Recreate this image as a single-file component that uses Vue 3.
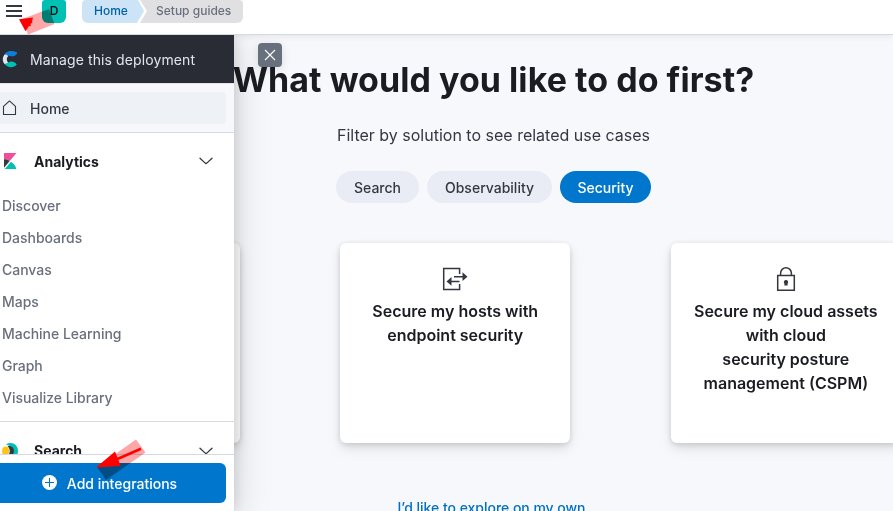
<script setup>
const links = ['Discover', 'Dashboards', 'Canvas', 'Maps', 'Machine Learning', 'Graph', 'Visualize Library']
const filters = ['Search', 'Observability', 'Security']
const active = 'Security'
</script>

<template>
  <div class="page">
    <header class="topbar">
      <button class="menu" aria-label="Toggle navigation"><i></i><i></i><i></i></button>
      <span class="avatar">D</span>
      <nav class="crumbs">
        <a class="crumb home">Home</a>
        <span class="crumb guides">Setup guides</span>
      </nav>
    </header>

    <main class="content">
      <h1>What would you like to do first?</h1>
      <p class="subtitle">Filter by solution to see related use cases</p>
      <div class="filters">
        <button v-for="f in filters" :key="f" :class="['pill', f.toLowerCase(), { active: f === active }]">{{ f }}</button>
      </div>
      <div class="cards">
        <article class="card"></article>
        <article class="card">
          <svg width="26" height="24" viewBox="0 0 26 24">
            <path d="M17.600 7V1.600H1.700v20.800h15.900V17" fill="none" stroke="#343741" stroke-width="1.500" />
            <path d="M12 9.700H21M8 14.400h9.500" stroke="#343741" stroke-width="1.500" />
            <path d="M20.500 5.200l5 4.500-5 4.400zM9.500 10l-5 4.400 5 4.400z" fill="#343741" />
          </svg>
          <h2>Secure my hosts with<br>endpoint security</h2>
        </article>
        <article class="card">
          <svg width="26" height="24" viewBox="0 0 26 24">
            <path d="M4.700 8.500h16.600v14.800H4.700z" fill="none" stroke="#343741" stroke-width="1.500" />
            <path d="M7.600 8.500V6.200a5.400 5.400 0 0 1 10.800 0v2.300" fill="none" stroke="#343741" stroke-width="1.500" />
            <path d="M13 13a2.200 2.200 0 0 0-1.500 3.800L11.300 18.600h3.400l-.2-1.800A2.200 2.200 0 0 0 13 13z" fill="#343741" />
          </svg>
          <h2>Secure my cloud assets<br>with cloud<br>security posture<br>management (CSPM)</h2>
        </article>
      </div>
      <a class="explore">I’d like to explore on my own</a>
    </main>

    <aside class="drawer">
      <div class="deployment">
        <svg class="cloud" width="18" height="18" viewBox="0 0 18 18">
          <path d="M4.500 4.500C6 .4 12 0 16.800 2.200c.6.900.2 1.600-.9 2.600-1.300 1.400-2.800 1.700-4.600 1.400C9 5.900 7 5.200 4.500 4.500z" fill="#0b7fdb" />
          <path d="M4.700 4.400c1.800 0 3 .7 3.600 1.600-2 1.600-1.900 5.200.1 6.500-.8 1.100-2.200 1.600-3.800 1.400C2.200 11.200 2.200 6.900 4.700 4.400z" fill="#dfe5ef" />
          <path d="M4.500 14c2.200 0 3.100-1.500 5-2 2.600-.9 4.900-.3 7.300 2.500C13.700 18.200 7.500 18 4.500 14z" fill="#00bfb3" />
        </svg>
        <span>Manage this deployment</span>
      </div>
      <div class="home-section">
        <a class="home-link">
          <svg width="16" height="16" viewBox="0 0 16 16">
            <path d="M1.500 6.300L7 1.300q.5-.4 1 0l5.500 5v8.200h-12z" fill="none" stroke="#343741" stroke-width="1.100" stroke-linejoin="round" />
          </svg>
          <span>Home</span>
        </a>
      </div>
      <section class="group">
        <h3>
          <svg class="solution" width="18" height="18" viewBox="0 0 18 18">
            <path d="M2 1h12.500L7.700 9C6.200 8 4.300 7.200 2 7.200z" fill="#f04e98" />
            <path d="M2 7.200c2.200 0 4.100.6 5.700 1.700L2 15.700z" fill="#343741" />
            <path d="M9 9.700c2.700 1.700 4.600 4.200 5.300 7.300H2.700z" fill="#00bfb3" />
          </svg>
          <span>Analytics</span>
          <svg class="chevron" width="16" height="16" viewBox="0 0 16 16"><path d="M2 5.200l5.200 4.900q.8.700 1.600 0L14 5.200" /></svg>
        </h3>
        <ul>
          <li v-for="link in links" :key="link">{{ link }}</li>
        </ul>
      </section>
      <section class="group clipped">
        <h3>
          <svg class="solution" width="18" height="18" viewBox="0 0 18 18">
            <path d="M4 2.500C9-.8 16 2 16 9s-7 10-12 6.500c8 0 9-11.500 0-13z" fill="#00bfb3" />
            <path d="M5.500 4.200C9 3.500 12 5.500 12 9s-3 5.500-6.500 4.800c3-2.300 3-7.300 0-9.600z" fill="#343741" />
            <ellipse cx="3.600" cy="9" rx="3.500" ry="4.600" fill="#fec514" />
          </svg>
          <span>Search</span>
          <svg class="chevron" width="16" height="16" viewBox="0 0 16 16"><path d="M2 5.200l5.200 4.900q.8.700 1.600 0L14 5.200" /></svg>
        </h3>
      </section>
      <footer>
        <button class="add">
          <svg width="16" height="16" viewBox="0 0 16 16">
            <circle cx="7.500" cy="7.500" r="7.500" fill="#fff" />
            <path d="M7.500 3v9M3 7.500h9" stroke="#0077cc" stroke-width="1.100" />
          </svg>
          <span>Add integrations</span>
        </button>
      </footer>
    </aside>

    <button class="close" aria-label="Close">
      <svg width="24" height="24" viewBox="0 0 24 24"><path d="M7 7l10 10M17 7L7 17" stroke="#fff" stroke-width="1.100" /></svg>
    </button>

    <svg class="pointer highlight at-menu" width="40" height="40" viewBox="0 0 40 40">
      <path d="M3 19L30 9l5.500 15L9 34.500z" />
    </svg>
    <svg class="pointer at-menu" width="40" height="40" viewBox="0 0 40 40">
      <path d="M0 19.300L14 17.500l-1 4 .5 1-2 1.500.3 2-2 .3-3.300 5z" />
    </svg>
    <svg class="pointer highlight at-add" width="52" height="44" viewBox="0 0 52 44">
      <path d="M1 28L40 .5l9.500 13L10 41z" />
    </svg>
    <svg class="pointer at-add" width="52" height="44" viewBox="0 0 52 44">
      <path d="M0 28.500L19 12.500l2.500 6L44.500 8.500l1 2.500-23 10L24.500 27z" />
    </svg>
  </div>
</template>

<style>
body { overflow: hidden; }
</style>

<style scoped>
* { box-sizing: border-box; }
.page {
  position: relative;
  width: 893px;
  height: 511px;
  overflow: hidden;
  background: #f7f8fc;
  color: #343741;
  font-family: Inter, sans-serif;
  font-size: 14px;
}
button { border: 0; padding: 0; font: inherit; }
h1, h2, h3, p, ul { margin: 0; padding: 0; }
svg { display: block; flex: none; }
.topbar {
  display: flex;
  align-items: flex-start;
  height: 35px;
  padding-left: 6px;
  background: #fff;
  border-bottom: 1px solid #d3dae6;
  box-shadow: 0 1px 7px rgba(0, 0, 0, .09);
}
.menu {
  display: flex;
  flex-direction: column;
  gap: 3px;
  width: 16px;
  padding-top: 5px;
  background: none;
}
.menu i { height: 2px; background: #343741; }
.avatar {
  width: 24px;
  height: 23px;
  margin-left: 20px;
  border-radius: 3px 3px 6px 6px;
  background: #00bfb3;
  color: #000;
  line-height: 22px;
  text-align: center;
  font-size: 12px;
  font-weight: 500;
}
.crumbs {
  display: flex;
  margin-left: 16px;
  font-size: 12px;
  font-weight: 500;
  line-height: 22px;
}
.crumb { height: 23px; }
.home {
  width: 62px;
  padding-left: 12px;
  border-radius: 4px 0 0 6px;
  background: #cce4f5;
  color: #0061a6;
  clip-path: polygon(0 0, 56px 0, 100% 11px, 55px 100%, 0 100%);
}
.guides {
  width: 103px;
  margin-left: -4px;
  padding-left: 16px;
  border-radius: 0 4px 6px 0;
  background: #e0e0e3;
  color: #69707d;
  clip-path: polygon(0 0, 100% 0, 100% 100%, 0 100%, 7px 11px);
}
.content {
  display: flex;
  flex-direction: column;
  align-items: center;
  width: 987px;
  padding-top: 24px;
}
h1 {
  color: #1a1c21;
  font-size: 34px;
  font-weight: 700;
  line-height: 42px;
  letter-spacing: .04px;
  white-space: nowrap;
}
.subtitle { margin-top: 22px; font-size: 16px; line-height: 24px; }
.filters { display: flex; gap: 8px; margin-top: 24px; }
.pill {
  width: 83px;
  height: 32px;
  border-radius: 16px;
  background: #e9ecf4;
  color: #343741;
  font-weight: 500;
  line-height: 33px;
}
.pill.observability { width: 125px; }
.pill.security { width: 91px; }
.pill.active { background: #0077cc; color: #fff; }
.cards {
  display: grid;
  grid-template-columns: repeat(3, 230.300px);
  gap: 100.300px;
  align-self: flex-start;
  margin: 40px 0 0 9.500px;
}
.card {
  display: flex;
  flex-direction: column;
  align-items: center;
  height: 200px;
  padding-top: 24px;
  border-radius: 6px;
  background: #fff;
  box-shadow: 0 1px 5px rgba(0, 0, 0, .1), 0 4px 8px rgba(0, 0, 0, .08), 0 7px 16px rgba(0, 0, 0, .06);
}
.card h2 {
  margin-top: 8px;
  color: #1a1c21;
  font-size: 16px;
  font-weight: 600;
  line-height: 24px;
  text-align: center;
  white-space: nowrap;
}
.explore {
  margin: 55px 4px 0 0;
  color: #0071c2;
  font-weight: 500;
  line-height: 20px;
  letter-spacing: -.03px;
}
.drawer {
  position: absolute;
  top: 35px;
  left: 0;
  display: flex;
  flex-direction: column;
  width: 234px;
  height: 476px;
  background: #fff;
  box-shadow: 0 0 12px rgba(0, 0, 0, .12), 0 6px 36px rgba(0, 0, 0, .17);
  clip-path: inset(0 -80px 0 0);
}
.deployment {
  display: flex;
  align-items: center;
  gap: 12px;
  height: 48px;
  padding-top: 1px;
  background: #2a2c35;
  color: #dfe5ef;
  letter-spacing: .1px;
}
.home-section {
  height: 50px;
  padding: 8px 8px 0 0;
  background: #f7f8fc;
  border-top: 1px solid #e2e5ed;
  border-bottom: 1px solid #d3dae6;
}
.home-link {
  display: flex;
  align-items: center;
  gap: 12px;
  height: 32px;
  padding: 1px 0 0 2px;
  border-radius: 0 4px 4px 0;
  background: #eef1f6;
  font-weight: 500;
}
.group { height: 288px; }
.group h3 {
  display: flex;
  align-items: center;
  height: 57px;
  padding: 0 20px 0 2px;
  color: #1a1c21;
  font-size: 14px;
  font-weight: 700;
}
.group .solution { margin-right: 14px; }
.chevron {
  margin-left: auto;
  fill: none;
  stroke: #343741;
  stroke-width: 1.3;
  stroke-linecap: round;
}
ul { list-style: none; }
li {
  height: 32px;
  padding-left: 2px;
  color: #69707d;
  font-weight: 500;
  line-height: 32px;
  letter-spacing: -.03px;
}
.clipped {
  height: 33px;
  margin-top: 1px;
  overflow: hidden;
  border-top: 1px solid #d3dae6;
}
footer {
  flex: 1;
  padding: 8px 8px 8px 0;
  border-top: 1px solid #d3dae6;
  background: #fff;
}
.add {
  display: flex;
  align-items: center;
  justify-content: center;
  gap: 9px;
  width: 226px;
  height: 40px;
  padding-right: 7px;
  border-radius: 0 6px 6px 0;
  background: #0077cc;
  color: #fff;
  font-weight: 500;
}
.close {
  position: absolute;
  top: 43px;
  left: 258px;
  border-radius: 4px;
  background: #69707d;
  box-shadow: 0 2px 10px rgba(0, 0, 0, .12);
}
.pointer { position: absolute; fill: #f00; }
.pointer.highlight { fill: #ffa6a6; mix-blend-mode: multiply; }
.at-menu { top: 0; left: 19px; }
.at-add { top: 439px; left: 96px; }
</style>
